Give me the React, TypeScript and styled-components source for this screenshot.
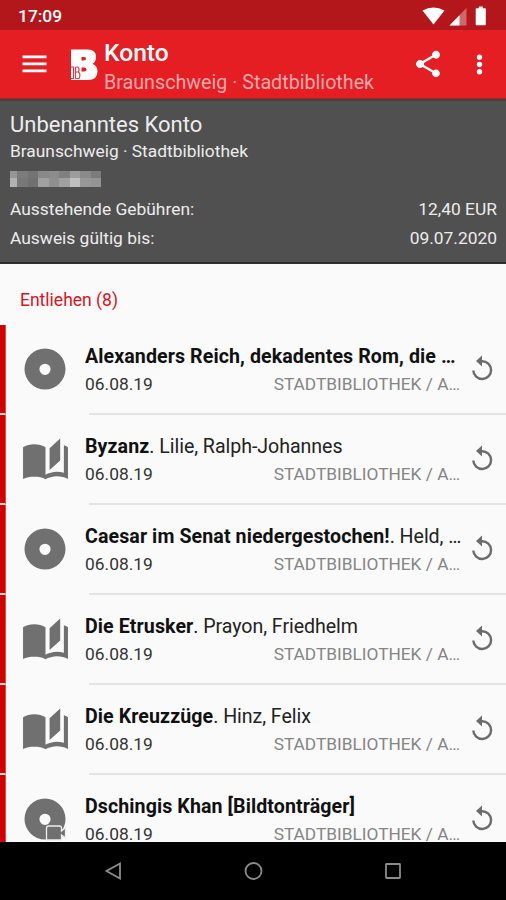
import React from "react";
import styled, { createGlobalStyle } from "styled-components";

const GlobalStyle = createGlobalStyle`
  * { box-sizing: border-box; }
  html, body { margin: 0; padding: 0; background: #000; }
  svg { display: block; }
`;

const Screen = styled.div`
  display: flex;
  flex-direction: column;
  width: 506px;
  height: 900px;
  overflow: hidden;
  background: #fafafa;
  color: #000;
  font-family: Roboto, "Liberation Sans", sans-serif;
  white-space: nowrap;
`;

const StatusBar = styled.div`
  display: flex;
  align-items: center;
  flex: none;
  height: 30px;
  padding: 2px 16px 0 18px;
  background: #b4171b;
  color: #fff;
`;

const Clock = styled.div`
  flex: 1;
  font-size: 17.4px;
  font-weight: 500;
`;

const AppBar = styled.header`
  display: flex;
  flex: none;
  height: 69px;
  background: #e41e23;
  color: #fff;
  border-bottom: 1px solid #b51d20;
`;

const MenuButton = styled.div`
  flex: none;
  width: 70px;
  padding: 25px 0 0 22px;
`;

const Logo = styled.div`
  flex: none;
  width: 34px;
  padding-top: 19px;
`;

const Titles = styled.div`
  flex: 1;
  padding-top: 8px;
`;

const Title = styled.h1`
  margin: 0;
  font-size: 24.6px;
  line-height: 29px;
  font-weight: 500;
`;

const Subtitle = styled.div`
  font-size: 19.7px;
  line-height: 27px;
  margin-top: 2px;
  color: #f9a9ab;
`;

const Actions = styled.div`
  display: flex;
  gap: 18px;
  padding: 17px 10px 0 0;
`;

const Account = styled.section`
  flex: none;
  height: 165px;
  padding: 11px 9px 0 10px;
  background: #505050;
  color: #ececec;
  border-top: 2px solid #3c4545;
  border-bottom: 2px solid #2c2c2c;
`;

const AccountName = styled.div`
  font-size: 22px;
  line-height: 26px;
`;

const AccountLibrary = styled.div`
  font-size: 17.35px;
  line-height: 24px;
  margin-top: 1px;
`;

const Redacted = styled.div`
  display: grid;
  grid-template-columns: 7px repeat(8, 1fr);
  grid-template-rows: 7px 9px;
  width: 91px;
  margin: 8px 0 8px;
`;

const Cell = styled.span<{ $tone: number }>`
  background: ${(p) => `rgb(${p.$tone}, ${p.$tone}, ${p.$tone})`};
`;

const Fact = styled.div`
  display: flex;
  justify-content: space-between;
  font-size: 17.4px;
  line-height: 29px;
`;

const SectionTitle = styled.h2`
  flex: none;
  margin: 0;
  height: 61px;
  padding: 22px 0 0 20px;
  font-size: 17.5px;
  line-height: 28px;
  font-weight: 400;
  color: #d8141c;
`;

const LoanList = styled.div`
  flex: 1;
  min-height: 0;
  overflow: hidden;
`;

const Loan = styled.div`
  display: flex;
  height: 90px;
`;

const Stripe = styled.div`
  flex: none;
  width: 6px;
  background: #d40000;
  border-right: 1px solid #e04a4a;
  border-bottom: 2px solid #f4d4d4;
`;

const MediaType = styled.div`
  flex: none;
  display: flex;
  justify-content: center;
  align-items: center;
  width: 79px;
  height: 88px;
  padding-right: 1px;
`;

const LoanBody = styled.div`
  flex: 1;
  min-width: 0;
  display: flex;
  background: linear-gradient(#e4e4e4, #e4e4e4) 4px 100% / 100% 2px no-repeat;
`;

const LoanText = styled.div`
  width: 377px;
  padding-top: 18px;
`;

const LoanTitle = styled.div`
  font-size: 19.6px;
  line-height: 28px;
  letter-spacing: -0.05px;
  color: #222;

  b {
    font-weight: 700;
    letter-spacing: 0.09px;
    color: #111;
  }
`;

const LoanMeta = styled.div`
  display: flex;
  justify-content: space-between;
  width: 375px;
  font-size: 17.4px;
  line-height: 26px;
  color: #333;
`;

const Branch = styled.span`
  font-size: 17.3px;
  color: #858585;
`;

const Renew = styled.div`
  padding: 27px 0 0 6px;
`;

const NavBar = styled.nav`
  display: flex;
  flex: none;
  justify-content: center;
  align-items: center;
  gap: 118px;
  height: 58px;
  background: #000;
`;

const StatusIcons = () => (
  <svg width="68" height="24" viewBox="0 0 68 24" fill="#fff">
    <path d="M0.500 6.500Q11.500 .5 22.500 6.500L11.500 20.500Z" />
    <path d="M44.500 4V21.500H27.500Z" opacity="0.35" />
    <path d="M37.500 11.200V21.500H27.500Z" />
    <path d="M54.500 4.200h2.300V2.500h4v1.700h2.200q.8 0 .8.800v15.500q0 .8-.8.800h-8.500q-.8 0-.8-.8V5q0-.8.800-.8z" />
  </svg>
);

const MenuIcon = () => (
  <svg width="25" height="18" viewBox="0 0 25 18" fill="#fff">
    <path d="M.5 .5h24v2.800H.5zM.5 7.500h24v2.800H.5zM.5 14.500h24v2.800H.5z" />
  </svg>
);

const LogoIcon = () => (
  <svg width="28" height="32" viewBox="0 0 28 32">
    <path
      fill="#fff"
      fillRule="evenodd"
      d="M1 .5H18Q26 .5 26 8Q26 13 22.500 14.800Q27.500 17 27.500 22.500Q27.500 31 18 31H1ZM11.500 8V11.500H14Q16 11.500 16 9.700T14 8ZM11.500 18.500V22.500H14Q16.500 22.500 16.500 20.500T14 18.500Z"
    />
    <path
      fill="none"
      stroke="#d8434a"
      strokeWidth="1.200"
      d="M1 18H3.500V29.500H1M5.500 18V29.500M5.500 18H7.500Q10 19 8.500 23Q11 25 9 29.500H5.500M5.500 23H8.500"
    />
  </svg>
);

const ShareIcon = () => (
  <svg width="32" height="34" viewBox="0 0 24 24" fill="#fff">
    <path d="M18 16.080c-.76 0-1.440.3-1.960.77L8.910 12.700c.05-.23.090-.46.090-.7s-.04-.47-.09-.7l7.050-4.110c.54.5 1.250.81 2.040.81 1.660 0 3-1.340 3-3s-1.340-3-3-3-3 1.340-3 3c0 .24.04.47.09.7L8.040 9.810C7.500 9.310 6.790 9 6 9c-1.660 0-3 1.340-3 3s1.340 3 3 3c.79 0 1.500-.31 2.040-.81l7.120 4.160c-.05.21-.08.43-.08.650 0 1.610 1.310 2.920 2.920 2.920s2.920-1.310 2.920-2.920-1.310-2.920-2.920-2.920z" />
  </svg>
);

const MoreIcon = () => (
  <svg width="34" height="34" viewBox="0 0 34 34" fill="#fff">
    <circle cx="17.500" cy="10.300" r="2.700" />
    <circle cx="17.500" cy="17.500" r="2.700" />
    <circle cx="17.500" cy="24.700" r="2.700" />
  </svg>
);

const DiscPath = () => (
  <path
    fill="#707070"
    fillRule="evenodd"
    d="M28 7.500a20.500 20.500 0 1 0 0 41a20.500 20.500 0 1 0 0-41zM28 22.700a5.600 5.600 0 1 1 0 11.200a5.600 5.600 0 1 1 0-11.200z"
  />
);

const DiscIcon = () => (
  <svg width="56" height="56" viewBox="0 0 56 56">
    <DiscPath />
  </svg>
);

const MovieIcon = () => (
  <svg width="56" height="56" viewBox="0 0 56 56">
    <DiscPath />
    <path
      fill="#707070"
      stroke="#ededed"
      strokeWidth="1.300"
      d="M31.500 35H42.500Q44.500 35 44.500 37V40L48.500 36.500V47L44.500 44V49H29.500V37Q29.500 35 31.500 35Z"
    />
  </svg>
);

const BookIcon = () => (
  <svg width="49" height="49" viewBox="0 0 24 24" fill="#707070">
    <path d="M19.200 1.700l-5.200 4.800v10.700l5.200-4.700V1.700zM1 6v15.500c1.500-.8 3.300-1.100 5.500-1.100 2 0 4.050.2 5.500 1.300V6c-1.450-1.100-3.550-1.500-5.500-1.500S2.450 4.900 1 6zm22 15.500V6c-.6-.45-1.250-.75-2-1v13.500c-1.100-.35-2.300-.5-3.500-.5-1.700 0-4.150.650-5.500 1.500v2.200c1.350-.85 3.800-1.500 5.500-1.500 2 0 4 .4 5.500 1.300z" />
  </svg>
);

const RenewIcon = () => (
  <svg width="30" height="34" viewBox="0 0 30 34">
    <path fill="none" stroke="#6c6c6c" strokeWidth="2.400" d="M5.300 18.500A8.900 8.900 0 1 0 14 9.200H11" />
    <path fill="#6c6c6c" d="M8 9L14 3.500V14.500Z" />
  </svg>
);

const icons = { disc: DiscIcon, book: BookIcon, movie: MovieIcon };

const loans: { kind: keyof typeof icons; title: string; author?: string }[] = [
  { kind: "disc", title: "Alexanders Reich, dekadentes Rom, die …" },
  { kind: "book", title: "Byzanz", author: "Lilie, Ralph-Johannes" },
  { kind: "disc", title: "Caesar im Senat niedergestochen!", author: "Held, …" },
  { kind: "book", title: "Die Etrusker", author: "Prayon, Friedhelm" },
  { kind: "book", title: "Die Kreuzzüge", author: "Hinz, Felix" },
  { kind: "movie", title: "Dschingis Khan [Bildtonträger]" },
];

const mosaic = [
  150, 124, 116, 136, 140, 128, 156, 138, 124,
  178, 120, 112, 160, 144, 160, 192, 152, 148,
];

export default function App() {
  return (
    <Screen>
      <GlobalStyle />
      <StatusBar>
        <Clock>17:09</Clock>
        <StatusIcons />
      </StatusBar>
      <AppBar>
        <MenuButton><MenuIcon /></MenuButton>
        <Logo><LogoIcon /></Logo>
        <Titles>
          <Title>Konto</Title>
          <Subtitle>Braunschweig · Stadtbibliothek</Subtitle>
        </Titles>
        <Actions>
          <ShareIcon />
          <MoreIcon />
        </Actions>
      </AppBar>
      <Account>
        <AccountName>Unbenanntes Konto</AccountName>
        <AccountLibrary>Braunschweig · Stadtbibliothek</AccountLibrary>
        <Redacted>
          {mosaic.map((tone, i) => <Cell key={i} $tone={tone} />)}
        </Redacted>
        <Fact><span>Ausstehende Gebühren:</span><span>12,40 EUR</span></Fact>
        <Fact><span>Ausweis gültig bis:</span><span>09.07.2020</span></Fact>
      </Account>
      <SectionTitle>Entliehen (8)</SectionTitle>
      <LoanList>
        {loans.map(({ kind, title, author }) => {
          const Icon = icons[kind];
          return (
            <Loan key={title}>
              <Stripe />
              <MediaType><Icon /></MediaType>
              <LoanBody>
                <LoanText>
                  <LoanTitle><b>{title}</b>{author && `. ${author}`}</LoanTitle>
                  <LoanMeta><span>06.08.19</span><Branch>STADTBIBLIOTHEK / A…</Branch></LoanMeta>
                </LoanText>
                <Renew><RenewIcon /></Renew>
              </LoanBody>
            </Loan>
          );
        })}
      </LoanList>
      <NavBar>
        <svg width="22" height="22" viewBox="0 0 22 22" fill="none" stroke="#8c8c8c" strokeWidth="1.800">
          <path d="M18 3.500V18.500L4.500 11Z" />
        </svg>
        <svg width="22" height="22" viewBox="0 0 22 22" fill="none" stroke="#8c8c8c" strokeWidth="1.800">
          <circle cx="11.500" cy="11" r="8" />
        </svg>
        <svg width="22" height="22" viewBox="0 0 22 22" fill="none" stroke="#8c8c8c" strokeWidth="1.800">
          <rect x="4" y="4" width="14" height="14" rx="0.500" />
        </svg>
      </NavBar>
    </Screen>
  );
}
